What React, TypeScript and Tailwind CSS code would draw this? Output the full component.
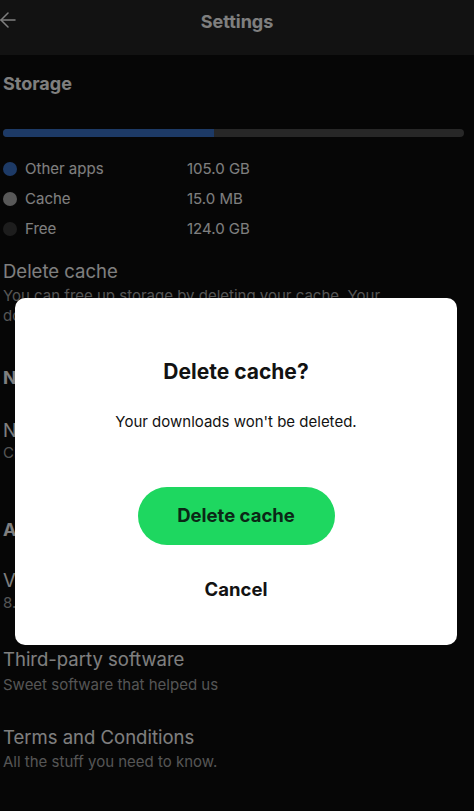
import { ArrowLeft } from 'lucide-react';

const legend = [
    { label: 'Other apps', value: '105.0 GB', dot: 'bg-[#3a74cc]' },
    { label: 'Cache', value: '15.0 MB', dot: 'bg-[#b0b0b0]' },
    { label: 'Free', value: '124.0 GB', dot: 'bg-[#3a3a3a]' },
];

export default function App() {
    return (
        <div className="relative h-[811px] w-[474px] overflow-hidden bg-[#0c0c0c] font-['Inter',sans-serif] text-white">
            {/* Header */}
            <div className="relative flex h-[55px] justify-center bg-[#242424] pt-[10px]">
                <ArrowLeft className="absolute left-[-4px] top-[8px] h-[24px] w-[24px]" strokeWidth={1.5} />
                <span className="text-[18px] font-bold leading-[24px]">Settings</span>
            </div>

            <div className="w-[440px] pl-[3px]">
                <div className="mt-[17px] text-[18px] font-bold leading-[24px]">Storage</div>

                <div className="mt-[33px] flex h-[8px] w-[461px] overflow-hidden rounded-full bg-[#4e4e4e]">
                    <div className="h-full w-[211px] bg-[#3a74cc]" />
                </div>

                <div className="mt-[17px]">
                    {legend.map((row) => (
                        <div key={row.label} className="flex h-[30px] items-center text-[15px]">
                            <span className={`h-[14px] w-[14px] rounded-full ${row.dot}`} />
                            <span className="ml-[8px] w-[162px]">{row.label}</span>
                            <span>{row.value}</span>
                        </div>
                    ))}
                </div>

                <div className="mt-[15px] text-[18.5px] leading-[24px]">Delete cache</div>
                <div className="mt-[3px] text-[15px] leading-[20px] text-[#aaaaaa]">
                    You can free up storage by deleting your cache. Your downloads won't be deleted.
                </div>

                <div className="mt-[40px] text-[18px] font-bold leading-[24px]">Notifications</div>
                <div className="mt-[28px] text-[18.5px] leading-[24px]">Notifications</div>
                <div className="mt-[1px] text-[15px] leading-[20px] text-[#aaaaaa]">Choose which notifications you receive.</div>

                <div className="mt-[55px] text-[18px] font-bold leading-[24px]">About</div>
                <div className="mt-[26px] text-[18.5px] leading-[24px]">Version</div>
                <div className="mt-[1px] text-[15px] leading-[20px] text-[#aaaaaa]">8.7.78.373</div>

                <div className="mt-[34px] text-[18.5px] leading-[24px]">Third-party software</div>
                <div className="mt-[4px] text-[15px] leading-[20px] text-[#aaaaaa]">Sweet software that helped us</div>

                <div className="mt-[30px] text-[18.5px] leading-[24px]">Terms and Conditions</div>
                <div className="mt-[3px] text-[15px] leading-[20px] text-[#aaaaaa]">All the stuff you need to know.</div>

                <div className="mt-[38px] text-[18.5px] leading-[24px]">Privacy Policy</div>
            </div>

            {/* Dim overlay */}
            <div className="absolute inset-0 bg-black/50" />

            {/* Dialog */}
            <div className="absolute left-[15px] top-[298px] flex h-[347px] w-[442px] flex-col items-center rounded-[10px] bg-white pt-[60px] text-[#121212]">
                <div className="text-[21px] font-bold leading-[28px]">Delete cache?</div>
                <div className="mt-[26px] text-[15px] leading-[20px]">Your downloads won't be deleted.</div>
                <button className="mt-[55px] flex h-[58px] w-[197px] items-center justify-center rounded-full bg-[#1ed760] text-[18.5px] font-bold text-[#0b2716]">
                    Delete cache
                </button>
                <button className="mt-[32px] text-[18.5px] font-bold leading-[24px]">Cancel</button>
            </div>
        </div>
    );
}
